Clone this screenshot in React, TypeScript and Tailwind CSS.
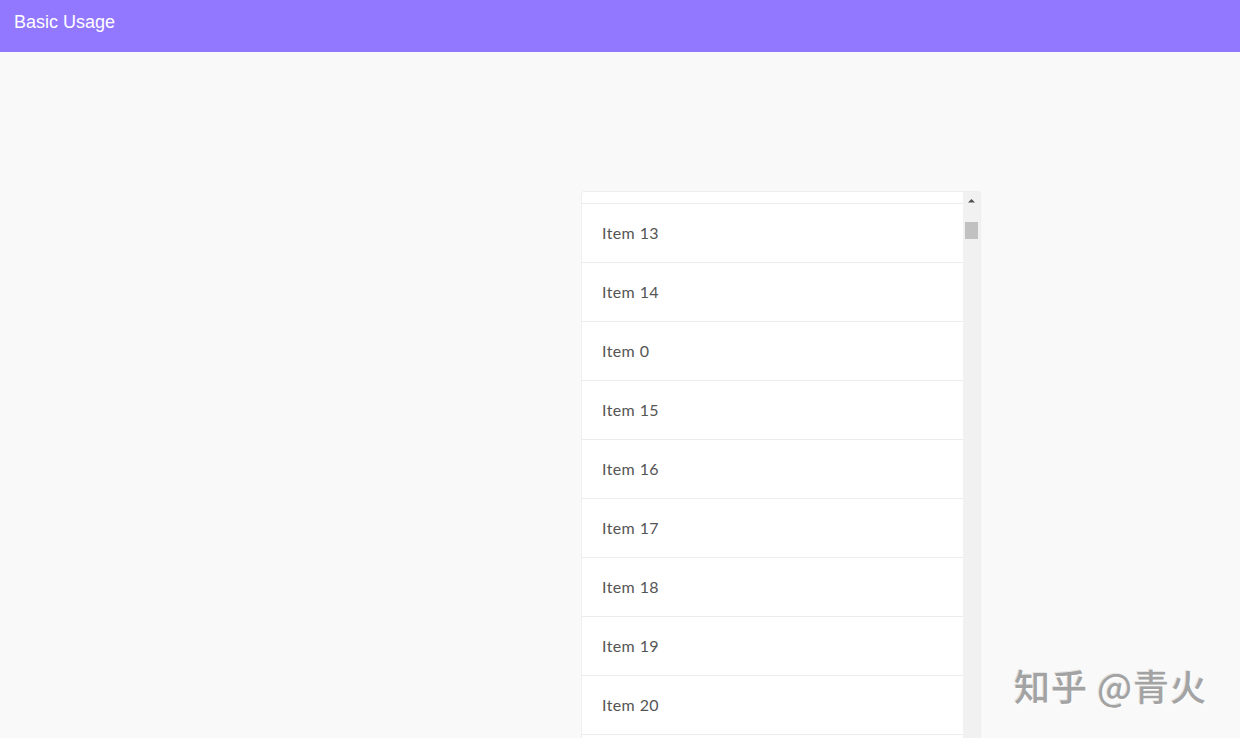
import React from "react";

const items = ["Item 13", "Item 14", "Item 0", "Item 15", "Item 16", "Item 17", "Item 18", "Item 19", "Item 20"];

export default function App() {
  return (
    <div className="relative h-[738px] w-[1240px] overflow-hidden bg-[#f9f9f9]">
      <div className="flex h-[52px] items-center bg-[#9277ff] px-[14px] pb-[8px] text-[18px] text-white [font-family:'Liberation_Sans',Arial,sans-serif]">
        Basic Usage
      </div>
      <div className="ml-[581px] mt-[139px] flex w-[400px] rounded-t-[3px] border border-[#eeeeee] bg-white">
        <div className="flex w-[381px] flex-col">
          <div className="h-[12px] border-b border-[#ececec]" />
          {items.map((t) => (
            <div
              key={t}
              className="flex h-[59px] items-center border-b border-[#ececec] pl-[20px] text-[16px] tracking-[0.4px] text-[#555555] [font-family:Lato,'Open_Sans',sans-serif]"
            >
              {t}
            </div>
          ))}
          <div className="h-[59px]" />
        </div>
        <div className="flex w-[17px] flex-col items-center bg-[#f1f1f1]">
          <svg width="17" height="17" viewBox="0 0 17 17">
            <path d="M5 10.5 L8.5 7 L12 10.5 Z" fill="#505050" />
          </svg>
          <div className="mt-[13px] h-[17px] w-[13px] bg-[#c1c1c1]" />
        </div>
      </div>
      <div className="absolute left-[1014px] top-[662px] text-[36px] font-medium leading-[46px] tracking-[1px] text-[#a3a3a3] [font-family:'Noto_Sans_CJK_SC',sans-serif] [text-shadow:1px_1px_1px_#ffffff,-1px_-1px_0_#e4e4e4]">
        知乎 @青火
      </div>
    </div>
  );
}
